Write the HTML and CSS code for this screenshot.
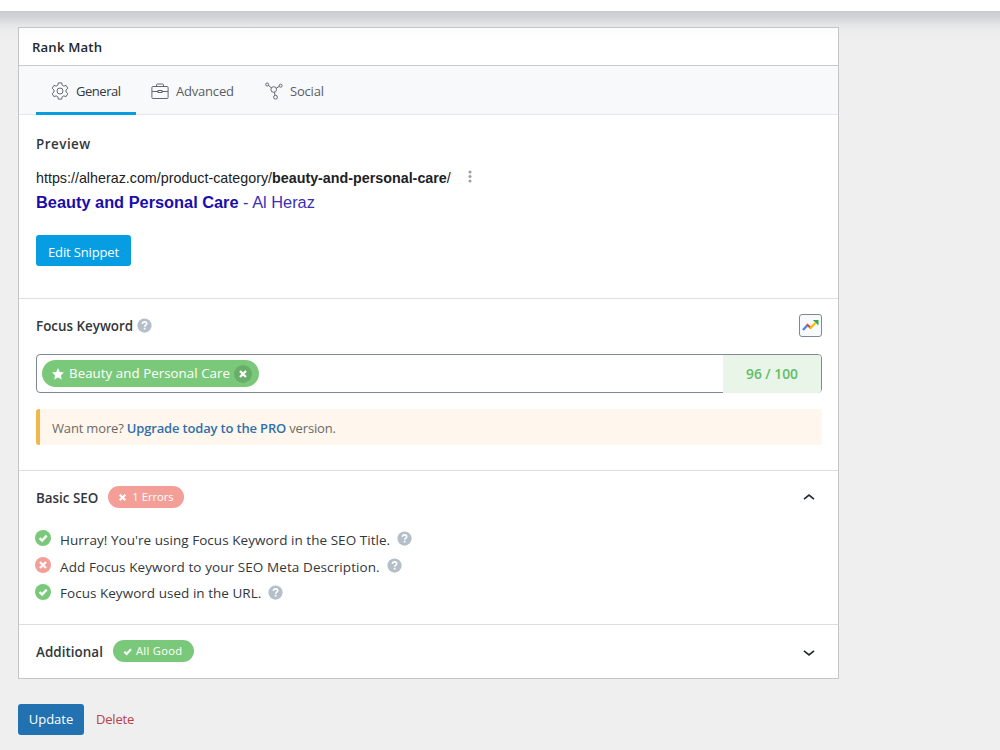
FILE: index.html
```html
<!DOCTYPE html>
<html lang="en">
<head>
    <meta charset="UTF-8">
    <meta name="viewport" content="width=device-width, initial-scale=1.0">
    <title>Edit Category</title>
    <link rel="stylesheet" href="styles.css">
</head>
<body>
    <!-- Shared icon shapes -->
    <svg class="sprite" width="0" height="0">
        <symbol id="check" viewBox="0 0 16 16"><path d="M4.600 8.200l2.500 2.400 4.600-5" fill="none" stroke="currentColor" stroke-width="2.300"/></symbol>
        <symbol id="cross" viewBox="0 0 16 16"><path d="M5 5l6 6M11 5l-6 6" fill="none" stroke="currentColor" stroke-width="2.300"/></symbol>
        <symbol id="help" viewBox="0 0 16 16">
            <circle cx="8" cy="8" r="7.600" fill="#b5bfc9"/>
            <path d="M5.700 6.300C5.800 4.800 6.800 4.100 8.100 4.100c1.400 0 2.300.8 2.300 1.900 0 1.500-2.200 1.600-2.200 3.300" fill="none" stroke="#fff" stroke-width="1.700"/>
            <rect x="7.200" y="10.400" width="1.900" height="1.900" fill="#fff"/>
        </symbol>
    </svg>

    <div class="topbar"></div>

    <div class="page">
        <div class="metabox">
            <h2 class="metabox-title"><span>Rank Math</span></h2>

            <div class="tabs">
                <a class="tab active">
                    <svg width="18" height="18" viewBox="0 0 18 18">
                        <path d="M7.300.9h3.400l.5 2.300 1.600.9 2.300-.7 1.700 2.900-1.800 1.700v2l1.800 1.700-1.700 2.900-2.300-.7-1.600.9-.5 2.300H7.300l-.5-2.300-1.600-.9-2.300.7-1.700-2.900L3 10V8L1.200 6.300l1.700-2.900 2.300.7 1.600-.9z" stroke-linejoin="round"/>
                        <circle cx="9" cy="9" r="3"/>
                    </svg>
                    <span>General</span>
                </a>
                <a class="tab tab-advanced">
                    <svg width="18" height="18" viewBox="0 0 18 18">
                        <rect x=".9" y="4.500" width="16.200" height="12" rx="1"/>
                        <path d="M5.500 4.500v-1.500q0-1 1-1h5q1 0 1 1v1.500M.9 9.500h6.100M11 9.500h6.100"/>
                        <rect x="7" y="8.500" width="4" height="2"/>
                    </svg>
                    <span>Advanced</span>
                </a>
                <a class="tab tab-social">
                    <svg width="18" height="18" viewBox="0 0 18 18">
                        <circle cx="8.700" cy="7.500" r="2.800"/>
                        <circle cx="2.200" cy="2.500" r="1.500"/>
                        <circle cx="15.600" cy="3.700" r="1.500"/>
                        <circle cx="10.500" cy="15.200" r="1.900"/>
                        <path d="M3.400 3.400l3 2.400M14.200 4.400l-3 1.900M9.300 10.300l.8 3"/>
                    </svg>
                    <span>Social</span>
                </a>
            </div>

            <section class="section snippet">
                <h3><span>Preview</span></h3>
                <div class="snippet-url">
                    <span>https://alheraz.com/product-category/<b>beauty-and-personal-care</b>/</span>
                    <svg width="4" height="13" viewBox="0 0 4 13" fill="#9a9ea3"><circle cx="2" cy="2" r="1.500"/><circle cx="2" cy="6.500" r="1.500"/><circle cx="2" cy="11" r="1.500"/></svg>
                </div>
                <div class="snippet-title"><span><b>Beauty and Personal Care</b> - Al Heraz</span></div>
                <button class="btn btn-edit"><span>Edit Snippet</span></button>
            </section>

            <section class="section focus">
                <div class="focus-head">
                    <h3><span>Focus Keyword</span></h3>
                    <svg class="help" width="15" height="15"><use href="#help"/></svg>
                    <button class="trends">
                        <svg width="17" height="13" viewBox="0 0 17 13" fill="none" stroke-width="2.200">
                            <path d="M1 11l4.300-4.700" stroke="#4285f4"/>
                            <path d="M4.800 5.300l4.200 4" stroke="#ea4335"/>
                            <path d="M8.300 9.300l5-5.300" stroke="#fbbc04"/>
                            <path d="M10.800 1h5.700v5.500z" fill="#34a853"/>
                        </svg>
                    </button>
                </div>
                <div class="keyword-field">
                    <div class="keyword-input">
                        <span class="tag">
                            <svg width="12" height="12" viewBox="0 0 12 12" fill="#fff"><path d="M6 0l1.800 3.900 4.200.5-3.100 2.900.8 4.200L6 9.400l-3.700 2.100.8-4.200L0 4.400l4.200-.5z"/></svg>
                            <span class="tag-text">Beauty and Personal Care</span>
                            <span class="tag-remove"><svg width="16" height="16"><use href="#cross"/></svg></span>
                        </span>
                    </div>
                    <div class="score"><span>96 / 100</span></div>
                </div>
                <div class="notice"><span>Want more? <a>Upgrade today to the PRO</a> version.</span></div>
            </section>

            <section class="section basic">
                <div class="panel-head">
                    <h3><span>Basic SEO</span></h3>
                    <span class="badge bad"><svg width="15" height="15"><use href="#cross"/></svg><span>1 Errors</span></span>
                    <svg class="chevron" width="12" height="8" viewBox="0 0 12 8"><path d="M1 6.200l5-4 5 4"/></svg>
                </div>
                <ul class="checks">
                    <li>
                        <i class="status good"><svg width="16" height="16"><use href="#check"/></svg></i>
                        <span class="check-one">Hurray! You're using Focus Keyword in the SEO Title.</span>
                        <svg class="help" width="15" height="15"><use href="#help"/></svg>
                    </li>
                    <li>
                        <i class="status bad"><svg width="16" height="16"><use href="#cross"/></svg></i>
                        <span class="check-two">Add Focus Keyword to your SEO Meta Description.</span>
                        <svg class="help" width="15" height="15"><use href="#help"/></svg>
                    </li>
                    <li>
                        <i class="status good"><svg width="16" height="16"><use href="#check"/></svg></i>
                        <span class="check-three">Focus Keyword used in the URL.</span>
                        <svg class="help" width="15" height="15"><use href="#help"/></svg>
                    </li>
                </ul>
            </section>

            <section class="section additional">
                <div class="panel-head">
                    <h3><span>Additional</span></h3>
                    <span class="badge good"><svg width="15" height="15"><use href="#check"/></svg><span>All Good</span></span>
                    <svg class="chevron down" width="12" height="8" viewBox="0 0 12 8"><path d="M1 1.800l5 4 5-4"/></svg>
                </div>
            </section>
        </div>

        <div class="actions">
            <button class="btn btn-update"><span>Update</span></button>
            <a class="delete"><span>Delete</span></a>
        </div>
    </div>
</body>
</html>
```
FILE: styles.css
```css
* {
    margin: 0;
    padding: 0;
    box-sizing: border-box;
}
body {
    height: 750px;
    font-family: "Open Sans", "Noto Sans", sans-serif;
    font-size: 13px;
    color: #32373c;
    background: #efefef;
    overflow: hidden;
}
svg {
    display: block;
    flex: none;
}
span {
    white-space: nowrap;
}
.sprite {
    position: absolute;
}
.topbar {
    height: 11px;
    background: #fff;
}
.page {
    height: 739px;
    padding: 16px 0 0 18px;
    background: linear-gradient(#c8cacd, #d4d5d8 7px, #e5e6e8 14px, #ececec 20px, #efefef 30px);
}
.metabox {
    width: 821px;
    height: 652px;
    background: #fff;
    border: 1px solid #c3c5c9;
}
.metabox-title {
    display: flex;
    align-items: center;
    height: 38px;
    padding-left: 13px;
    font-size: 13.2px;
    font-weight: 600;
    letter-spacing: 0.15px;
    color: #23282d;
    background: linear-gradient(#fbfbfb, #fff 14px);
    border-bottom: 1px solid #c3cbd3;
}
.tabs {
    display: flex;
    height: 49px;
    padding-left: 17px;
    background: #f8f9fb;
    border-bottom: 1px solid #e5e7ea;
}
.tab {
    display: flex;
    align-items: center;
    gap: 7px;
    height: 49px;
    padding: 4px 15px 0;
    color: #595d62;
    letter-spacing: -0.2px;
    border-bottom: 3px solid transparent;
}
.tab svg {
    fill: none;
    stroke: #5d6167;
    stroke-width: 0.95;
}
.tab.active {
    width: 100px;
    color: #32373c;
    letter-spacing: -0.45px;
    border-bottom-color: #069de3;
}
.tab-advanced {
    width: 114px;
}
.section {
    padding: 0 16px 0 17px;
    border-bottom: 1px solid #dcdee0;
}
h3 {
    font-size: 13.4px;
    font-weight: 600;
    line-height: 20px;
    color: #32373c;
}
.snippet {
    height: 184px;
    padding-top: 19px;
}
.snippet h3 {
    letter-spacing: 0.5px;
}
.snippet-url {
    display: flex;
    align-items: center;
    gap: 17px;
    height: 20px;
    margin-top: 14px;
    font-family: "Liberation Sans", Arial, sans-serif;
    font-size: 14.3px;
    color: #202124;
}
.snippet-url svg {
    margin-bottom: 4px;
}
.snippet-title {
    height: 24px;
    margin-top: 2px;
    line-height: 24px;
    font-family: "Liberation Sans", Arial, sans-serif;
    font-size: 16.35px;
    color: #3a2fb5;
}
.snippet-title b {
    color: #1a0dab;
}
.btn {
    display: flex;
    align-items: center;
    justify-content: center;
    font-family: inherit;
    font-size: 13px;
    color: #fff;
    border: none;
    border-radius: 3px;
}
.btn-edit {
    width: 95px;
    height: 31px;
    margin-top: 21px;
    padding-top: 2px;
    letter-spacing: -0.15px;
    background: #069de3;
}
.focus {
    height: 172px;
    padding-top: 15px;
}
.focus-head {
    display: flex;
    align-items: center;
    height: 24px;
}
.focus-head .help {
    margin: 0 0 2px 4px;
}
.trends {
    display: flex;
    align-items: center;
    justify-content: center;
    width: 23px;
    height: 23px;
    margin: 0 0 1px auto;
    background: #f8f9fb;
    border: 1px solid #7e8993;
    border-radius: 3px;
}
.keyword-field {
    display: flex;
    height: 39px;
    margin-top: 16px;
    border: 1px solid #7e8993;
    border-radius: 4px;
}
.keyword-input {
    flex: 1;
    padding: 5px;
}
.tag {
    display: flex;
    align-items: center;
    width: 217px;
    height: 27px;
    padding: 0 7px 0 10px;
    color: #fff;
    background: #7ac97a;
    border-radius: 14px;
}
.tag-text {
    margin: 0 0 1px 5px;
    font-size: 13.3px;
    letter-spacing: 0.05px;
}
.tag-remove {
    display: flex;
    align-items: center;
    justify-content: center;
    width: 18px;
    height: 18px;
    margin-left: auto;
    background: #68ae6a;
    border-radius: 50%;
}
.score {
    display: flex;
    align-items: center;
    justify-content: center;
    width: 98px;
    height: 38px;
    padding-bottom: 1px;
    font-size: 13.8px;
    font-weight: 600;
    color: #62bd64;
    background: #e9f5e9;
    border-radius: 0 3px 3px 0;
}
.notice {
    display: flex;
    align-items: center;
    height: 36px;
    margin-top: 16px;
    padding: 2px 0 0 12px;
    color: #6b6a66;
    letter-spacing: -0.17px;
    background: #fff7ed;
    border-left: 4px solid #f0b849;
    border-radius: 3px;
}
.notice a {
    font-weight: 600;
    color: #3070a8;
}
.panel-head {
    display: flex;
    align-items: center;
    height: 22px;
}
.panel-head h3 {
    padding-top: 2px;
}
.badge {
    display: flex;
    align-items: center;
    height: 22px;
    margin-left: 10px;
    padding: 0 0 1px 7px;
    font-size: 11.2px;
    color: #fff;
    border-radius: 11px;
}
.badge.bad {
    width: 76px;
    gap: 2px;
}
.badge.good {
    width: 81px;
    padding-left: 7px;
    gap: 1px;
    letter-spacing: 0.3px;
}
.badge svg {
    margin-top: 2px;
}
.good {
    background: #7ac97a;
}
.bad {
    background: #f39f98;
}
.chevron {
    margin: 0 7px 0 auto;
    fill: none;
    stroke: #23282d;
    stroke-width: 1.7;
}
.chevron.down {
    margin-top: 3px;
}
.basic {
    height: 154px;
    padding-top: 15px;
}
.checks {
    margin-top: 17px;
    list-style: none;
}
.checks li {
    display: flex;
    align-items: center;
    height: 26.7px;
}
.checks li > span {
    margin: 3px 7px 0 9px;
    font-size: 13.5px;
}
.checks .check-one {
    letter-spacing: 0.04px;
}
.checks .check-two {
    letter-spacing: 0.09px;
}
.checks .check-three {
    letter-spacing: 0.03px;
}
.checks .help {
    margin-top: 1px;
}
.status {
    width: 16px;
    height: 16px;
    margin-left: -1px;
    color: #fff;
    border-radius: 50%;
}
.additional {
    padding-top: 15px;
    border-bottom: none;
}
.additional h3 {
    letter-spacing: 0.05px;
}
.actions {
    display: flex;
    align-items: center;
    gap: 12px;
    height: 31px;
    margin-top: 25px;
}
.btn-update {
    width: 66px;
    height: 31px;
    padding-bottom: 1px;
    background: #2271b1;
}
.delete {
    padding-bottom: 1px;
    color: #b94048;
    letter-spacing: -0.2px;
}
```
